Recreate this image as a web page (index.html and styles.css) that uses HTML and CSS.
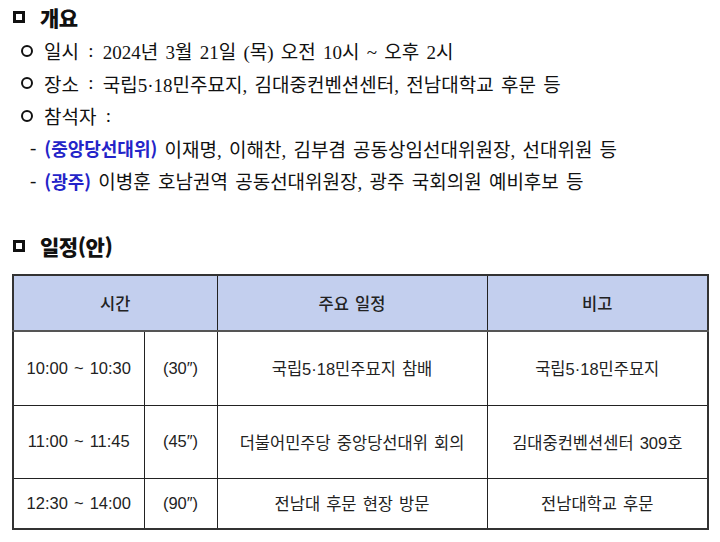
FILE: index.html
```html
<!DOCTYPE html>
<html lang="ko">
<head>
<meta charset="utf-8">
<link rel="stylesheet" href="styles.css">
</head>
<body>
<div class="page">
  <h2 class="title"><span class="sq"></span>개요</h2>
  <ul class="items">
    <li class="item"><span class="circ"></span>일시 <span class="colon">:</span> 2024년 3월 21일 (목) 오전 10시 ~ 오후 2시</li>
    <li class="item"><span class="circ"></span>장소 <span class="colon">:</span> 국립5·18민주묘지, 김대중컨벤션센터, 전남대학교 후문 등</li>
    <li class="item"><span class="circ"></span>참석자 <span class="colon">:</span></li>
    <li class="sub"><span class="dash">-</span><b class="blue">(중앙당선대위)</b> 이재명, 이해찬, 김부겸 공동상임선대위원장, 선대위원 등</li>
    <li class="sub"><span class="dash">-</span><b class="blue">(광주)</b> 이병훈 호남권역 공동선대위원장, 광주 국회의원 예비후보 등</li>
  </ul>
  <h2 class="title title2"><span class="sq"></span>일정(안)</h2>
  <table class="sched">
    <colgroup>
      <col class="c1"><col class="c2"><col class="c3"><col class="c4">
    </colgroup>
    <thead>
      <tr class="head"><th colspan="2">시간</th><th>주요 일정</th><th>비고</th></tr>
    </thead>
    <tbody>
      <tr class="r1"><td>10:00 ~ 10:30</td><td>(30″)</td><td>국립5·18민주묘지 참배</td><td>국립5·18민주묘지</td></tr>
      <tr class="r2"><td>11:00 ~ 11:45</td><td>(45″)</td><td>더불어민주당 중앙당선대위 회의</td><td>김대중컨벤션센터 309호</td></tr>
      <tr class="r3"><td>12:30 ~ 14:00</td><td>(90″)</td><td>전남대 후문 현장 방문</td><td>전남대학교 후문</td></tr>
    </tbody>
  </table>
</div>
</body>
</html>
```

FILE: styles.css
```css
html, body {
  margin: 0;
  padding: 0;
  background: #fff;
}
.page {
  padding: 4px 0 0 12px;
  width: 696px;
  color: #111;
  font-family: "Liberation Serif", "Noto Sans CJK KR", serif;
}
.title {
  margin: 0;
  display: flex;
  align-items: center;
  height: 26px;
  font-family: "Noto Sans CJK KR", sans-serif;
  font-weight: 900;
  font-size: 21px;
  letter-spacing: -0.5px;
}
.sq {
  display: inline-block;
  width: 6px;
  height: 6px;
  border: 3px solid #111;
  margin: 0 15px 0 1px;
}
.items {
  list-style: none;
  margin: 4.5px 0 0 0;
  padding: 0;
}
.items li {
  height: 32.5px;
  display: flex;
  align-items: center;
  font-size: 19px;
  word-spacing: 2.5px;
  white-space: pre;
}
.item {
  padding-left: 9px;
}
.colon {
  margin: 0 2px;
}
.circ {
  display: inline-block;
  width: 8px;
  height: 8px;
  border: 2px solid #111;
  border-radius: 50%;
  margin-right: 11px;
}
.sub {
  padding-left: 18px;
}
.dash {
  margin-right: 8px;
}
.blue {
  color: #2424c8;
  font-family: "Noto Sans CJK KR", sans-serif;
  font-weight: 700;
  font-size: 18px;
}
.title2 {
  margin-top: 35.5px;
}
.sched {
  margin-top: 15px;
  border-collapse: collapse;
  border: 2px solid #333;
  font-family: "Liberation Sans", "Noto Sans CJK KR", sans-serif;
  font-size: 16.5px;
  word-spacing: 1.5px;
  color: #222;
  table-layout: fixed;
  width: 695px;
}
.c1 { width: 131px; }
.c2 { width: 73px; }
.c3 { width: 270px; }
.c4 { width: 221px; }
.sched th, .sched td {
  border: 1px solid #222;
  text-align: center;
  padding: 0;
}
.sched th {
  background: #c3cfee;
  font-weight: 500;
  height: 54px;
  border-bottom: 2px solid #555;
}
.r1 td { height: 73px; }
.r2 td { height: 72px; }
.r3 td { height: 49px; }
```
